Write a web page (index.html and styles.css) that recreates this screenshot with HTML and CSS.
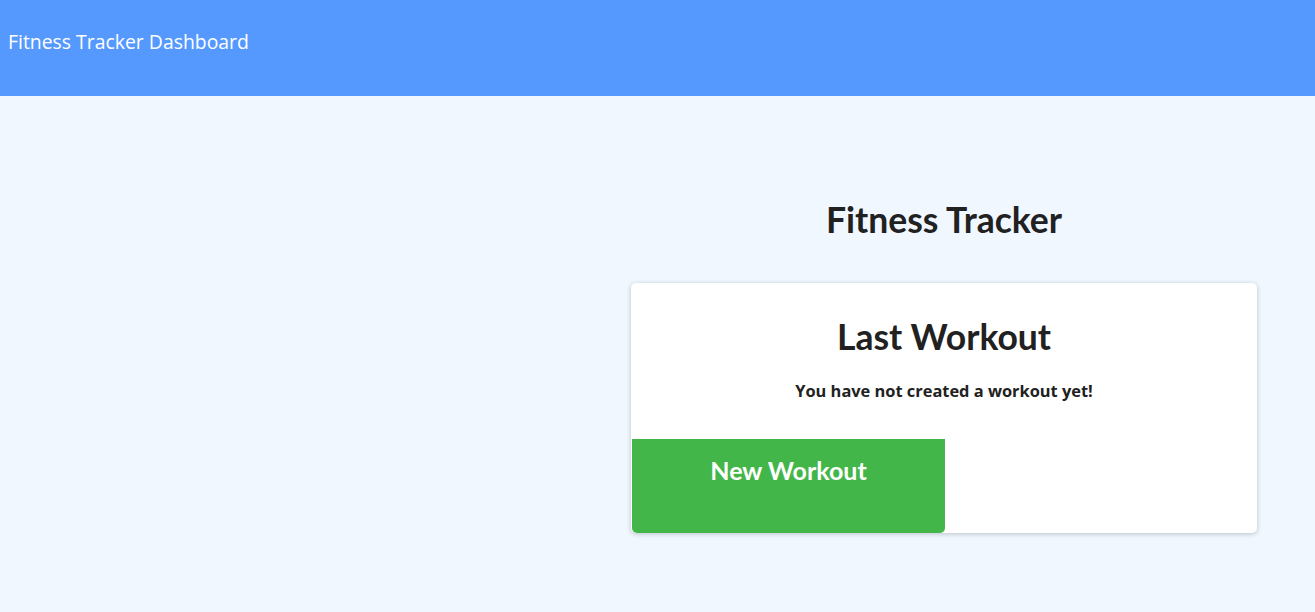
FILE: index.html
```html
<!DOCTYPE html>
<html lang="en">
<head>
<meta charset="utf-8">
<title>Fitness Tracker Dashboard</title>
<link rel="stylesheet" href="styles.css">
</head>
<body>
<header class="topbar">
  <span class="brand">Fitness Tracker Dashboard</span>
</header>
<main class="layout">
  <div class="spacer"></div>
  <section class="column">
    <h1 class="title">Fitness Tracker</h1>
    <div class="card">
      <h2 class="card-title">Last Workout</h2>
      <p class="card-text">You have not created a workout yet!</p>
      <div class="actions">
        <a class="btn-new" href="#">New Workout</a>
      </div>
    </div>
  </section>
</main>
</body>
</html>
```

FILE: styles.css
```css
html, body {
  margin: 0;
  padding: 0;
}
body {
  background: #f0f7ff;
  font-family: "Open Sans", "Noto Sans", sans-serif;
  color: #212121;
  min-height: 612px;
}
.topbar {
  height: 96px;
  background: #5599ff;
  box-sizing: border-box;
  padding: 28px 8px 0;
}
.brand {
  color: #ffffff;
  font-size: 19.4px;
  line-height: 28px;
  font-family: "Open Sans", "Noto Sans", sans-serif;
}
.layout {
  display: flex;
  padding: 0 58px 0 0;
}
.spacer {
  flex: 1;
}
.column {
  width: 626px;
  display: flex;
  flex-direction: column;
  align-items: stretch;
  padding-top: 102px;
}
.title {
  font-family: Lato, sans-serif;
  font-weight: 700;
  font-size: 35.5px;
  line-height: 43px;
  text-align: center;
  margin: 0 0 42px;
  color: #212121;
}
.card {
  background: #ffffff;
  border-radius: 5px;
  box-shadow: 0 1px 5px rgba(0, 0, 0, 0.22);
  display: flex;
  flex-direction: column;
  height: 250px;
  box-sizing: border-box;
  padding-top: 32px;
}
.card-title {
  font-family: Lato, sans-serif;
  font-weight: 700;
  font-size: 35.5px;
  line-height: 43px;
  text-align: center;
  margin: 0;
  color: #212121;
}
.card-text {
  font-family: "Open Sans", "Noto Sans", sans-serif;
  font-weight: 700;
  font-size: 16.4px;
  line-height: 22px;
  text-align: center;
  margin: 22px 0 0;
  color: #212121;
}
.actions {
  margin-top: auto;
  display: flex;
  padding-left: 1px;
}
.btn-new {
  width: 313px;
  height: 94px;
  box-sizing: border-box;
  background: #43b649;
  color: #ffffff;
  text-decoration: none;
  font-family: Lato, sans-serif;
  font-weight: 700;
  font-size: 25px;
  line-height: 30px;
  text-align: center;
  padding-top: 16px;
  border-radius: 0 0 5px 5px;
}
```
